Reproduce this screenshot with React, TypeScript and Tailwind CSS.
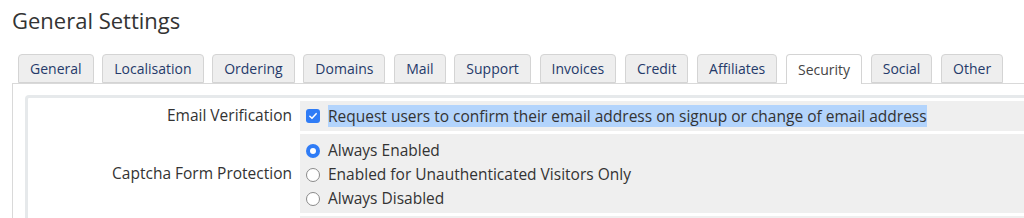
import React from "react";

const tabs = [
  "General",
  "Localisation",
  "Ordering",
  "Domains",
  "Mail",
  "Support",
  "Invoices",
  "Credit",
  "Affiliates",
  "Security",
  "Social",
  "Other",
];

const Checkbox: React.FC = () => (
  <span className="w-[14px] h-[14px] rounded-[3px] bg-[#2f7cf6] flex items-center justify-center shrink-0">
    <svg viewBox="0 0 12 12" className="w-[10px] h-[10px]">
      <path
        d="M2.2 6.3 L4.8 8.8 L9.8 3.2"
        fill="none"
        stroke="white"
        strokeWidth="1.8"
        strokeLinecap="round"
        strokeLinejoin="round"
      />
    </svg>
  </span>
);

const Radio: React.FC<{ checked?: boolean }> = ({ checked }) =>
  checked ? (
    <span className="w-[14px] h-[14px] rounded-full bg-[#2f7cf6] flex items-center justify-center shrink-0">
      <span className="w-[6px] h-[6px] rounded-full bg-white" />
    </span>
  ) : (
    <span className="w-[14px] h-[14px] rounded-full border border-[#8a8a8a] bg-white shrink-0" />
  );

const App: React.FC = () => {
  return (
    <div className="w-[1024px] h-[218px] overflow-hidden bg-white font-['Open_Sans',sans-serif] text-[#333]">
      {/* Title */}
      <h1 className="pl-[12px] pt-[5px] text-[22px] leading-[30px] font-normal text-[#333]">
        General Settings
      </h1>

      {/* Tabs */}
      <div className="flex gap-[8.7px] pl-[18px] mt-[19px] relative z-10">
        {tabs.map((t) => (
          <div
            key={t}
            className={
              t === "Security"
                ? "h-[30px] px-[11px] flex items-center border border-b-0 border-[#d4d4d4] rounded-t-[4px] bg-white text-[14px] text-[#444]"
                : "h-[29px] px-[11px] flex items-center border border-[#d4d4d4] rounded-t-[4px] bg-[#eeeeee] text-[14px] text-[#253a6a]"
            }
          >
            {t}
          </div>
        ))}
      </div>

      {/* Panel */}
      <div className="ml-[12px] -mt-px border-l border-t border-[#d9d9d9] pl-[12px] pt-[11px]">
        <div className="border-[3px] border-r-0 border-[#e6e9eb] rounded-l-[4px] p-[3px] pr-0">
          <div className="flex flex-col gap-[3px] text-[15.5px]">
            {/* Email Verification */}
            <div className="flex gap-[2px] h-[30px]">
              <div className="w-[267px] shrink-0 flex items-center justify-end pr-[6px]">
                Email Verification
              </div>
              <div className="flex-1 bg-[#efefef] flex items-center pl-[6px] gap-[8px]">
                <Checkbox />
                <span className="bg-[#b3d4fc] leading-[22px] whitespace-nowrap">
                  Request users to confirm their email address on signup or change of email address
                </span>
              </div>
            </div>

            {/* Captcha */}
            <div className="flex gap-[2px] h-[79px]">
              <div className="w-[267px] shrink-0 flex items-center justify-end pr-[6px]">
                Captcha Form Protection
              </div>
              <div className="flex-1 bg-[#efefef] flex flex-col justify-center pl-[6px] pt-[2px]">
                {[
                  ["Always Enabled", true],
                  ["Enabled for Unauthenticated Visitors Only", false],
                  ["Always Disabled", false],
                ].map(([label, on]) => (
                  <div key={label as string} className="flex items-center gap-[8px] h-[24px]">
                    <Radio checked={on as boolean} />
                    <span>{label as string}</span>
                  </div>
                ))}
              </div>
            </div>

            {/* next row */}
            <div className="flex gap-[2px] h-[30px]">
              <div className="w-[267px] shrink-0" />
              <div className="flex-1 bg-[#efefef]" />
            </div>
          </div>
        </div>
      </div>
    </div>
  );
};

export default App;
